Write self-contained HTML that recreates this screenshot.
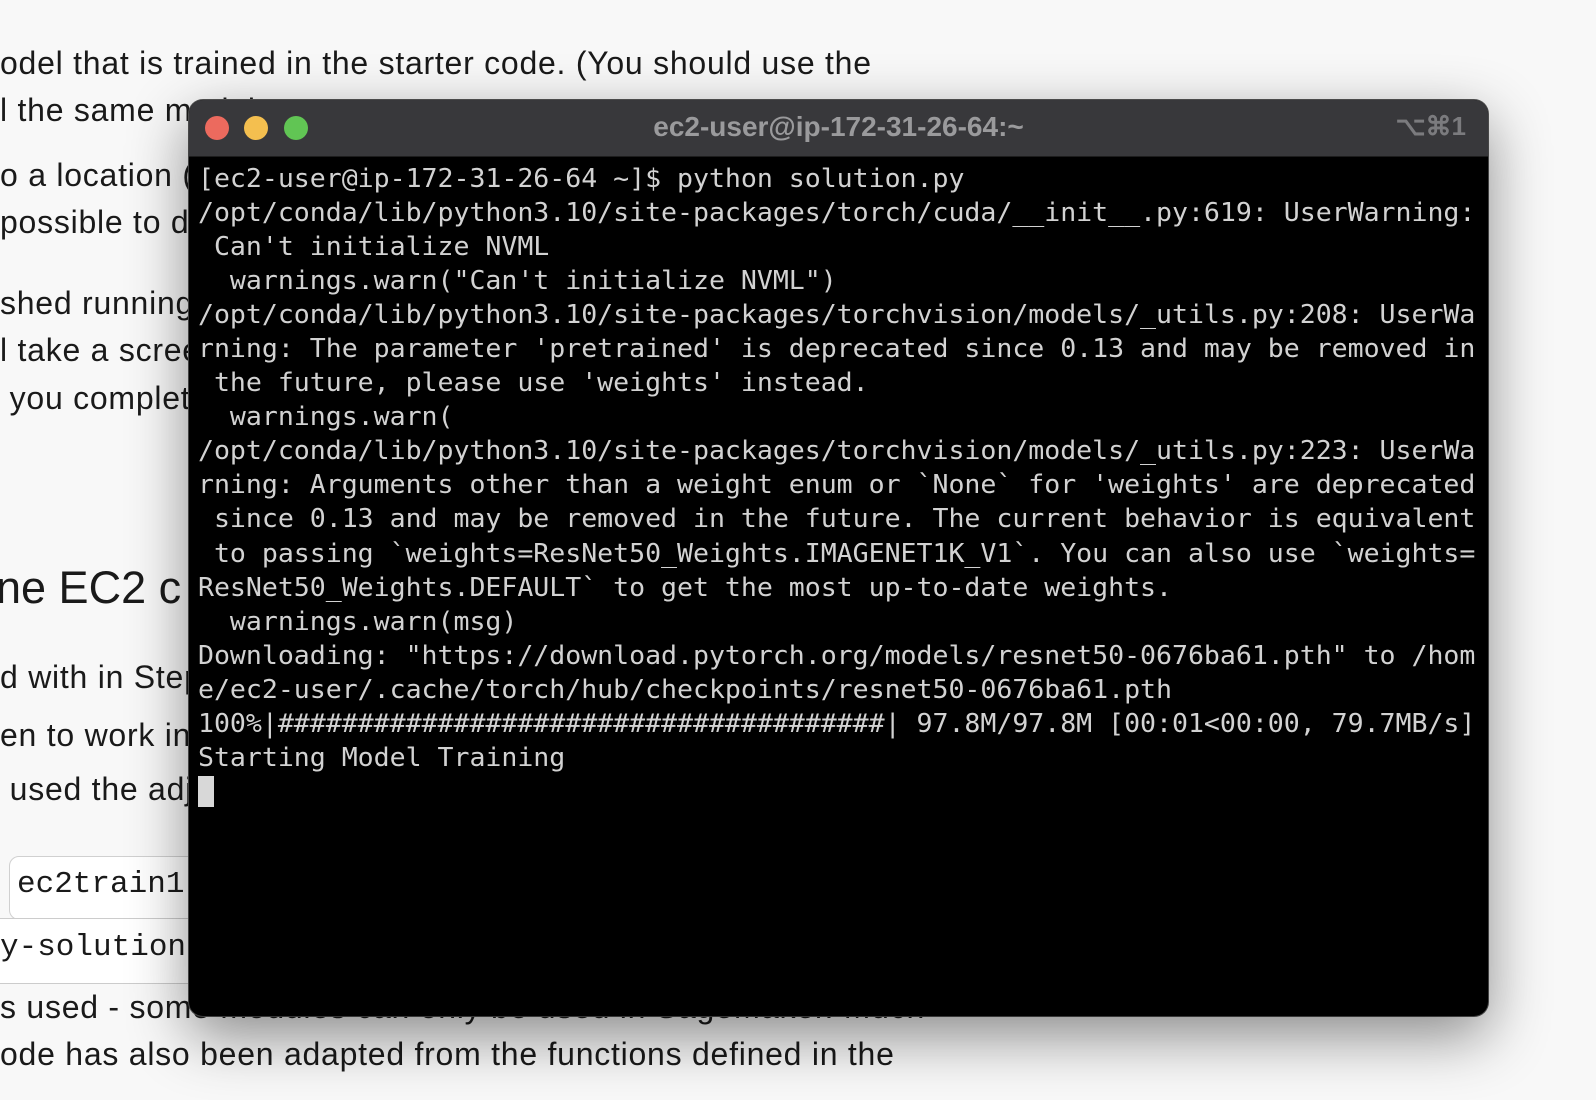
<!DOCTYPE html>
<html><head><meta charset="utf-8"><style>
html,body{margin:0;padding:0}
body{width:1596px;height:1100px;background:#f8f8f8;position:relative;overflow:hidden;font-family:"Liberation Sans",sans-serif;color:#1a1a1a}
.t{position:absolute;left:0;font-size:32px;white-space:nowrap;line-height:40px;letter-spacing:0.75px}
.h{position:absolute;left:-4px;font-size:45px;white-space:nowrap}
.code{position:absolute;font-family:"Liberation Mono","DejaVu Sans Mono",monospace;font-size:31px;white-space:nowrap}
.win{position:absolute;left:189px;top:100px;width:1299px;height:916px;border-radius:14px;background:#000;box-shadow:0 20px 60px rgba(0,0,0,.45),0 0 0 1px #555;overflow:hidden}
.bar{height:56px;background:#38383b;border-bottom:1px solid #1d1d1d;position:relative}
.dot{position:absolute;top:16px;width:24px;height:24px;border-radius:50%}
.title{position:absolute;left:0;right:0;top:11px;text-align:center;color:#9a9a9c;font-weight:bold;font-size:28px}
.kb{position:absolute;right:22px;top:11px;color:#7b7b7e;font-weight:bold;font-size:26px}
pre{margin:0;position:absolute;left:9px;top:62px;font-family:"DejaVu Sans Mono",monospace;font-size:26px;line-height:34.05px;color:#d2d2d2;letter-spacing:-0.03px;transform:scaleX(1.022);transform-origin:0 0}
.cur{position:absolute;left:9px;top:676px;width:16px;height:31px;background:#d8d8d8}
</style></head><body>
<div class="t" style="top:43px">odel that is trained in the starter code. (You should use the</div>
<div class="t" style="top:90px">l the same model</div>
<div class="t" style="top:155px">o a location (t</div>
<div class="t" style="top:202px">possible to d</div>
<div class="t" style="top:283px">shed running</div>
<div class="t" style="top:330px">l take a scree</div>
<div class="t" style="top:378px">&nbsp;you complet</div>
<div class="h" style="top:562px">ne EC2 c</div>
<div class="t" style="top:657px">d with in Step</div>
<div class="t" style="top:715px">en to work in</div>
<div class="t" style="top:769px">&nbsp;used the adj</div>
<div style="position:absolute;left:9px;top:856px;width:260px;height:62px;border:1px solid #d0d0d0;border-radius:10px;background:#fff"></div>
<div class="code" style="left:17px;top:867px">ec2train1</div>
<div style="position:absolute;left:0;top:918px;width:260px;height:64px;border-top:1px solid #ccc;border-bottom:1px solid #ccc;background:#fff"></div>
<div class="code" style="left:0;top:930px">y-solution</div>
<div class="t" style="top:987px">s used - some modules can only be used in SageMaker. Much</div>
<div class="t" style="top:1034px">ode has also been adapted from the functions defined in the</div>
<div class="win">
<div class="bar">
<div class="dot" style="left:16px;background:#ec6a5e"></div>
<div class="dot" style="left:55px;background:#f4bf4f"></div>
<div class="dot" style="left:95px;background:#61c554"></div>
<div class="title">ec2-user@ip-172-31-26-64:~</div>
<div class="kb">⌥⌘1</div>
</div>
<pre>[ec2-user@ip-172-31-26-64 ~]$ python solution.py
/opt/conda/lib/python3.10/site-packages/torch/cuda/__init__.py:619: UserWarning:
 Can't initialize NVML
  warnings.warn("Can't initialize NVML")
/opt/conda/lib/python3.10/site-packages/torchvision/models/_utils.py:208: UserWa
rning: The parameter 'pretrained' is deprecated since 0.13 and may be removed in
 the future, please use 'weights' instead.
  warnings.warn(
/opt/conda/lib/python3.10/site-packages/torchvision/models/_utils.py:223: UserWa
rning: Arguments other than a weight enum or `None` for 'weights' are deprecated
 since 0.13 and may be removed in the future. The current behavior is equivalent
 to passing `weights=ResNet50_Weights.IMAGENET1K_V1`. You can also use `weights=
ResNet50_Weights.DEFAULT` to get the most up-to-date weights.
  warnings.warn(msg)
Downloading: "https://download.pytorch.org/models/resnet50-0676ba61.pth" to /hom
e/ec2-user/.cache/torch/hub/checkpoints/resnet50-0676ba61.pth
100%|######################################| 97.8M/97.8M [00:01&lt;00:00, 79.7MB/s]
Starting Model Training</pre>
<div class="cur"></div>
</div>
</body></html>
